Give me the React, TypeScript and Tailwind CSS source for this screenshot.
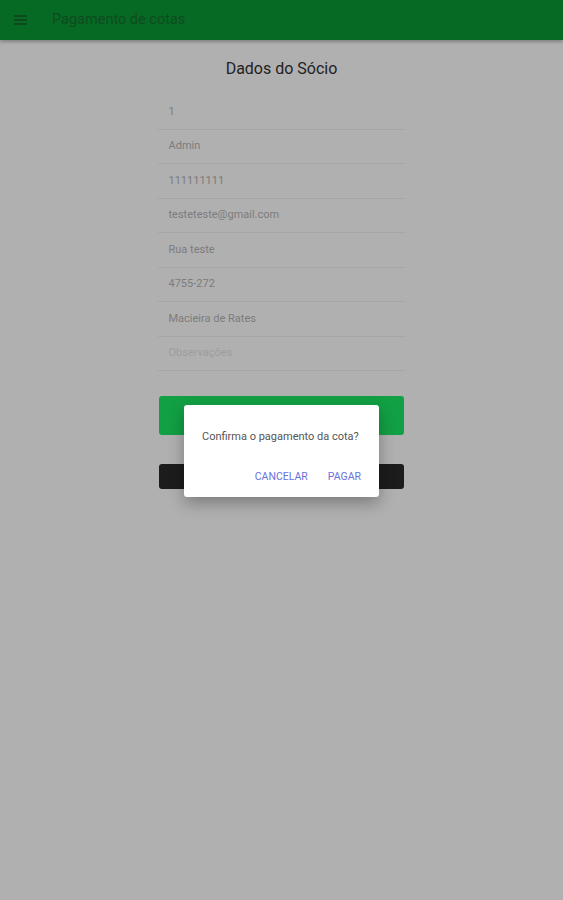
const fields = [
    { value: "1" },
    { value: "Admin" },
    { value: "111111111" },
    { value: "testeteste@gmail.com" },
    { value: "Rua teste" },
    { value: "4755-272" },
    { value: "Macieira de Rates" },
    { value: "Observações", placeholder: true },
];

export default function App() {
    return (
        <div className="relative min-h-[900px] w-full bg-[#b0b0b0] font-['Roboto','Liberation_Sans',sans-serif]">
            <div className="flex h-10 items-center bg-[#066a25] shadow-[0_2px_3px_rgba(0,0,0,0.25)]">
                <div className="ml-[14px] flex w-[13px] flex-col gap-[2px]">
                    <span className="h-[2px] bg-[#0f4a1e]"></span>
                    <span className="h-[2px] bg-[#0f4a1e]"></span>
                    <span className="h-[2px] bg-[#0f4a1e]"></span>
                </div>
                <p className="ml-[25px] text-[14.5px] text-[#104a20]">Pagamento de cotas</p>
            </div>

            <div className="mx-auto w-[248px] pt-[17px]">
                <p className="text-center text-[16px] text-[#222]">Dados do Sócio</p>
                <div className="mt-[14px]">
                    {fields.map((f, i) => (
                        <div key={i} className="flex h-[34.5px] items-center border-b border-[#a6a6a6] pl-[11px]">
                            <span className={`text-[11px] ${f.placeholder ? "text-[#9d9d9d]" : "text-[#7c7c7c]"}`}>{f.value}</span>
                        </div>
                    ))}
                </div>
                <div className="mt-[25px] ml-px h-[39px] w-[245px] rounded-[3px] bg-[#12a044]"></div>
                <div className="mt-[29px] ml-px h-[25px] w-[245px] rounded-[3px] bg-[#1c1c1c]"></div>
            </div>

            <div className="absolute left-[184px] top-[405px] w-[195px] rounded-[3px] bg-white shadow-[0_6px_16px_rgba(0,0,0,0.3)]">
                <p className="pl-[18px] pt-[24px] text-[11px] text-[#555]">Confirma o pagamento da cota?</p>
                <div className="flex justify-end gap-[20px] pr-[18px] pt-[23px] pb-[13px] text-[10.5px] text-[#6a72dc]">
                    <span>CANCELAR</span>
                    <span>PAGAR</span>
                </div>
            </div>
        </div>
    );
}
